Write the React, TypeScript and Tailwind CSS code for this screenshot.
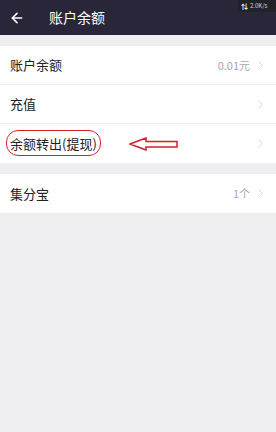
import { ArrowLeft, ChevronRight } from "lucide-react"

interface RowProps {
  label: string
  value?: string
  last?: boolean
  children?: React.ReactNode
}

function Row({ label, value, last, children }: RowProps) {
  return (
    <div className={`relative flex items-center h-[39px] pl-[10px] pr-[8px] bg-white ${last ? "" : "border-b border-[#ececec]"}`}>
      <span className="text-[13px] text-[#222]">{label}</span>
      {children}
      <div className="ml-auto flex items-center gap-[3px]">
        {value && <span className="text-[11px] text-[#a8a8a8]">{value}</span>}
        <ChevronRight size={15} strokeWidth={1} className="text-[#c4c4c4]" />
      </div>
    </div>
  )
}

export default function App() {
  return (
    <div className="w-[276px] h-[432px] bg-[#efeff2] flex flex-col" style={{ fontFamily: '"Noto Sans CJK SC", "Liberation Sans", sans-serif' }}>
      <div className="relative h-[35px] bg-[#282638] flex items-center pl-[9px] shrink-0">
        <ArrowLeft size={16} strokeWidth={2.4} className="text-white" />
        <span className="ml-[24px] text-[14px] text-white">账户余额</span>
        <div className="absolute right-0 top-0 h-[12px] w-[38px] bg-[#1f2328] flex items-center gap-[2px] pl-[3px]">
          <span className="text-[7px] leading-none text-white font-bold">⇅</span>
          <span className="text-[6px] leading-none text-[#cfd3d8]">2.0K/s</span>
        </div>
      </div>

      <div className="h-[11px] shrink-0" />

      <Row label="账户余额" value="0.01元" />
      <Row label="充值" />
      <Row label="余额转出(提现)" last>
        <div className="absolute left-[6px] top-[6px] w-[95px] h-[26px] border-[1.5px] border-[#d8202a] rounded-[12px]" />
        <svg className="absolute left-[129px] top-[13px]" width="50" height="14" viewBox="0 0 50 14">
          <path d="M1 7 L17 1 L17 4.5 L48 4.5 L48 10 L17 10 L17 13 Z" fill="none" stroke="#d21f2a" strokeWidth="1.5" strokeLinejoin="miter" />
        </svg>
      </Row>

      <div className="h-[11px] shrink-0" />

      <Row label="集分宝" value="1个" last />
    </div>
  )
}
